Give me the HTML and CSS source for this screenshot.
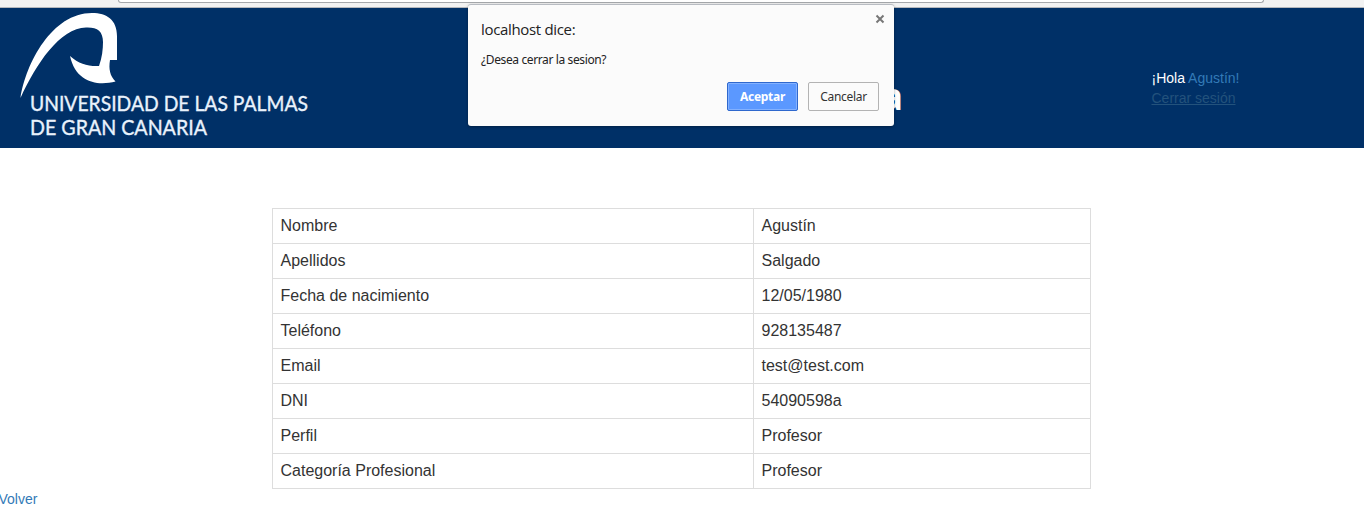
FILE: index.html
```html
<!DOCTYPE html>
<html lang="es">
<head>
<meta charset="utf-8">
<title>Datos de usuario</title>
<link rel="stylesheet" href="styles.css">
</head>
<body>
<div class="toolbar"><div class="address"></div></div>
<header class="header">
  <svg class="logo" width="320" height="140" viewBox="0 8 320 140">
    <path fill="#fff" d="M20.500 98C26 63 52 13 92 13C107 13 117 20 117 36V60H110C108.500 69 110 76 115.500 81.500C98 86 76 83 70 56C79 64 88 66.500 99 66C102 58 103 49 103 42C103 31 97 27 86 27.500C60 28 36 64 20.500 98Z"/>
    <g class="logo-text">
      <text x="30" y="110.500" textLength="278" lengthAdjust="spacingAndGlyphs">UNIVERSIDAD DE LAS PALMAS</text>
      <text x="30" y="134.500" textLength="177" lengthAdjust="spacingAndGlyphs">DE GRAN CANARIA</text>
    </g>
  </svg>
  <h1 class="title">a</h1>
  <div class="session">
    <div>¡Hola <a class="user">Agustín!</a></div>
    <div><a class="logout">Cerrar sesión</a></div>
  </div>
</header>
<main>
  <table class="profile">
    <tr><td class="label">Nombre</td><td>Agustín</td></tr>
    <tr><td>Apellidos</td><td>Salgado</td></tr>
    <tr><td>Fecha de nacimiento</td><td>12/05/1980</td></tr>
    <tr><td>Teléfono</td><td>928135487</td></tr>
    <tr><td>Email</td><td>test@test.com</td></tr>
    <tr><td>DNI</td><td>54090598a</td></tr>
    <tr><td>Perfil</td><td>Profesor</td></tr>
    <tr><td>Categoría Profesional</td><td>Profesor</td></tr>
  </table>
  <a class="back">Volver</a>
</main>
<div class="dialog" role="dialog">
  <div class="dialog-head">
    <span class="dialog-title">localhost dice:</span>
    <svg class="close" width="10" height="10" viewBox="0 0 10 10"><path d="M1.500 1.500L8.500 8.500M8.500 1.500L1.500 8.500" stroke="#777" stroke-width="2"/></svg>
  </div>
  <p class="message">¿Desea cerrar la sesion?</p>
  <div class="actions"><button class="btn primary">Aceptar</button><button class="btn">Cancelar</button></div>
</div>
</body>
</html>
```
FILE: styles.css
```css
* { box-sizing: border-box; }
body { margin: 0; height: 515px; overflow: hidden; background: #fff; color: #333; font: 14px/20px "Liberation Sans", Arial, sans-serif; }
.toolbar { height: 8px; background: #f2f2f2; border-bottom: 1px solid #b5b8bd; padding-left: 118px; }
.address { width: 1146px; height: 3px; background: #fff; border: 1px solid #a5a8ac; border-top: 0; border-radius: 0 0 3px 3px; }
.header { height: 140px; display: flex; background: #003067; color: #fff; }
.logo { display: block; flex: none; }
.logo-text { fill: #e9f2fc; stroke: #e9f2fc; stroke-width: .35px; font: 20.5px "Lato", "Open Sans", sans-serif; }
.title { margin: 0; width: 583px; padding-top: 68px; text-align: right; font: 700 37px/40px "Open Sans", sans-serif; }
.session { margin-left: 248.5px; padding-top: 60px; }
.user { color: #337ab7; }
.logout { color: #23527c; text-decoration: underline; }
.profile { margin: 60px 0 0 272px; width: 819px; border-collapse: collapse; font-size: 16px; line-height: 18px; }
.profile td { height: 35px; padding: 8px 8px 8px 7.5px; border: 1px solid #ddd; }
.profile .label { width: 481px; }
.back { display: block; margin-left: -1.5px; color: #337ab7; }
.dialog { position: absolute; left: 468px; top: 4px; width: 426px; height: 122px; padding: 11px 15px 0 13px; background: #fbfbfb; border-top: 1px solid #b8bcc2; border-radius: 3px; box-shadow: 0 1px 3px rgba(0,0,0,.35); color: #222; font: 12px/16px "Noto Sans", sans-serif; }
.dialog-head { display: flex; justify-content: space-between; height: 30px; }
.dialog-title { font: 15px/26px "Open Sans", sans-serif; letter-spacing: -.33px; }
.close { margin: -2px -6px 0 0; }
.message { margin: 6px 0 0; letter-spacing: -.38px; }
.actions { display: flex; justify-content: flex-end; gap: 10px; margin-top: 14px; }
.btn { width: 71px; height: 29px; padding: 0 0 1px; background: #fbfbfb; border: 1px solid #b3b3b3; border-radius: 2px; color: #333; font: 12px "Noto Sans", sans-serif; letter-spacing: -.3px; }
.primary { background: #5b98ff; border-color: #2f68cd; box-shadow: inset 0 0 0 1px #83b1ff; color: #fff; font-weight: 700; }
```
